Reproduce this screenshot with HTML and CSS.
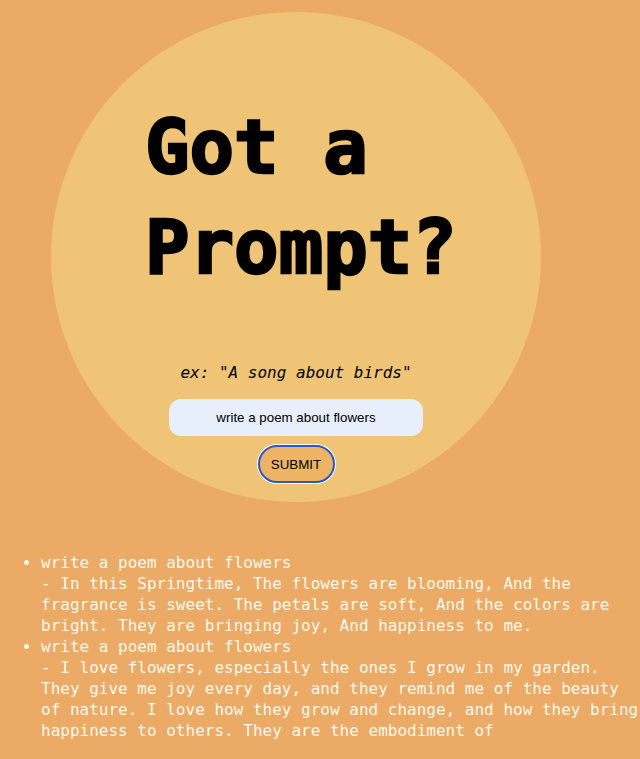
FILE: index.html
```html
<!DOCTYPE html>
<html>
<head>
<meta charset="utf-8">
<link rel="stylesheet" href="styles.css">
</head>
<body>
<div class="hero">
  <h1 class="title">Got a<br>Prompt?</h1>
  <p class="example">ex: "A song about birds"</p>
  <form class="prompt-form">
    <input class="prompt-input" type="text" value="write a poem about flowers">
    <button class="submit" type="button">SUBMIT</button>
  </form>
</div>
<ul class="results">
  <li>write a poem about flowers<br>- In this Springtime, The flowers are blooming, And the fragrance is sweet. The petals are soft, And the colors are bright. They are bringing joy, And happiness to me.</li>
  <li>write a poem about flowers<br>- I love flowers, especially the ones I grow in my garden. They give me joy every day, and they remind me of the beauty of nature. I love how they grow and change, and how they bring happiness to others. They are the embodiment of</li>
</ul>
</body>
</html>
```
FILE: styles.css
```css
html, body {
  margin: 0;
  padding: 0;
  background: #ebaa66;
}
body {
  font-family: "DejaVu Sans Mono", monospace;
}
.hero {
  width: 490px;
  height: 490px;
  margin: 12px 0 0 51px;
  border-radius: 50%;
  background: #f0c476;
  display: flex;
  flex-direction: column;
  align-items: center;
  box-sizing: border-box;
  padding-top: 85px;
}
.title {
  align-self: flex-start;
  margin: 0 0 0 94px;
  font-family: "DejaVu Sans Mono", monospace;
  font-weight: bold;
  font-size: 74px;
  line-height: 100px;
  -webkit-text-stroke: 2.5px #000;
  color: #000;
}
.example {
  margin: 66px 0 0 0;
  font-style: italic;
  font-size: 16px;
  line-height: 19px;
  color: #000;
}
.prompt-form {
  display: flex;
  flex-direction: column;
  align-items: center;
  margin-top: 17px;
}
.prompt-input {
  width: 254px;
  height: 37px;
  box-sizing: border-box;
  border: none;
  border-radius: 12px;
  background: #e8effc;
  font-family: "Liberation Sans", Arial, sans-serif;
  font-size: 13.33px;
  color: #000;
  text-align: center;
  outline: none;
  padding: 0;
}
.submit {
  margin-top: 9px;
  width: 77px;
  height: 38px;
  box-sizing: border-box;
  border: 2px solid #2d57c6;
  border-radius: 19px;
  box-shadow: 0 0 0 1px #ffffff;
  background: #ecb463;
  font-family: "Liberation Sans", Arial, sans-serif;
  font-size: 13.33px;
  color: #000;
  padding: 0;
}
.results {
  margin: 50px 0 0 0;
  padding: 0 0 0 41px;
  color: #fff8ec;
  font-size: 16px;
  line-height: 21px;
}
```
